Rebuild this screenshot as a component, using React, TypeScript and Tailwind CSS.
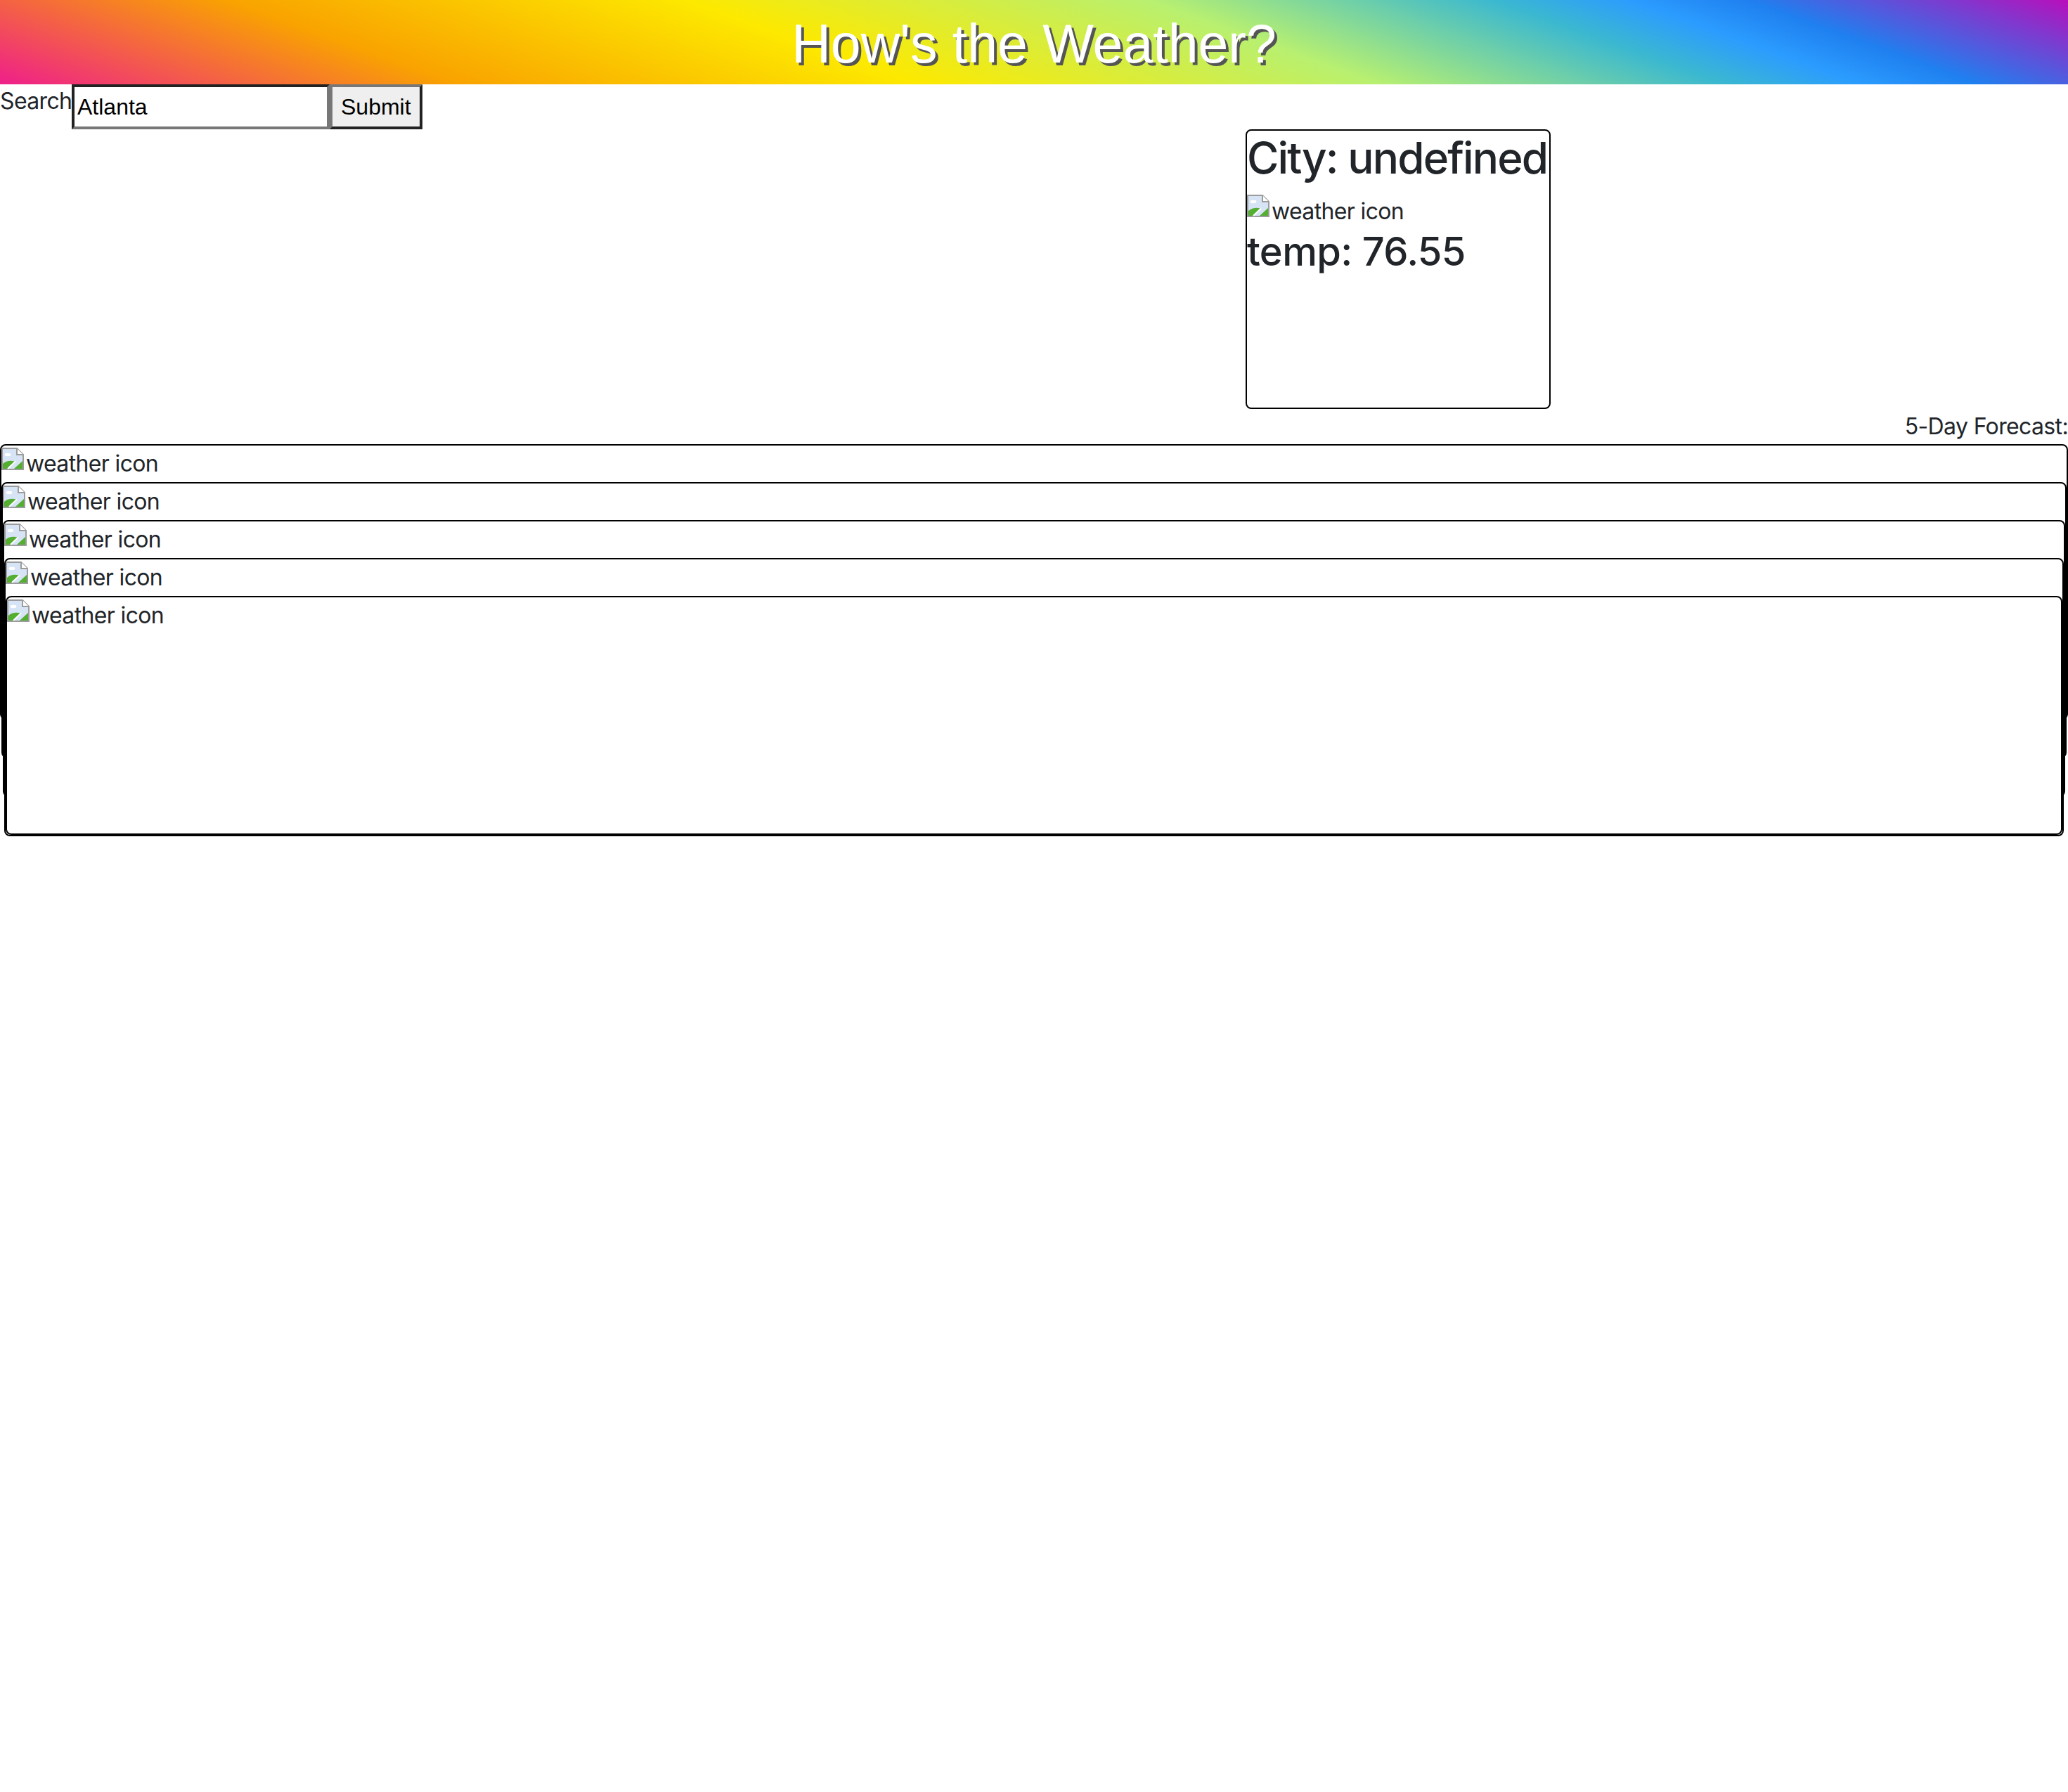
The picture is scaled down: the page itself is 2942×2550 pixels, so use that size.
import React from "react";

function BrokenImg() {
  return (
    <svg width="32" height="32" viewBox="0 0 16 16" className="shrink-0">
      <path d="M0.5 0.5 H11 L15.5 5 V15.5 H0.5 Z" fill="#d6e4f5" stroke="#9c9c9c" strokeWidth="1" />
      <path d="M11 0.5 V5 H15.5" fill="#ffffff" stroke="#9c9c9c" strokeWidth="1" />
      <ellipse cx="4.5" cy="5" rx="2.2" ry="1.1" fill="#ffffff" />
      <path d="M1 15 V11.5 Q4.5 8.5 9.5 9.8 L4.5 15 Z" fill="#54ae32" />
      <path d="M9 15 L15 9.5 V15 Z" fill="#54ae32" />
      <path d="M4.5 15 L10 9.8" stroke="#ffffff" strokeWidth="1" />
    </svg>
  );
}

const heights = ["h-[392px]", "h-[393px]", "h-[394px]", "h-auto", "h-[340px]"];

function Forecast({ level }: { level: number }) {
  if (level >= heights.length) return null;
  return (
    <div className={`border-2 border-solid border-black rounded-lg bg-white ${heights[level]}`}>
      <div className="flex h-[52px]">
        <div className="mt-[3px]">
          <BrokenImg />
        </div>
        <span className="ml-[3px] leading-[52px] whitespace-nowrap">weather icon</span>
      </div>
      <Forecast level={level + 1} />
    </div>
  );
}

export default function App() {
  return (
    <div className="min-h-[2550px] bg-white text-[#212529] font-['Inter','Noto_Sans',sans-serif] text-[32px] tracking-[-0.02em]">
      <header className="h-[120px] bg-[linear-gradient(20deg,#ef1f8a_0%,#f9a300_20%,#fde900_40%,#b8f070_60%,#3bb8d0_75%,#2b9cff_81%,#1f80ef_86%,#b80fbb_100%)] text-center">
        <h1 className="pt-[24px] font-['Liberation_Sans',Arial,sans-serif] text-[77px] leading-none tracking-normal text-white [text-shadow:4px_4px_0_#555555]">
          How's the Weather?
        </h1>
      </header>

      <div className="flex h-[64px]">
        <label className="w-[102px] leading-[48px] whitespace-nowrap">Search</label>
        <input
          defaultValue="Atlanta"
          className="w-[367px] h-[64px] px-[4px] py-[2px] border-4 border-solid border-t-[#222222] border-l-[#222222] border-b-[#777777] border-r-[#777777] bg-white text-black font-['Liberation_Sans',Arial,sans-serif] text-[32px] tracking-normal outline-none"
        />
        <button className="h-[64px] px-[12px] py-[2px] border-4 border-solid border-t-[#777777] border-l-[#777777] border-b-[#222222] border-r-[#222222] bg-[#efefef] text-black font-['Liberation_Sans',Arial,sans-serif] text-[32px] tracking-normal">
          Submit
        </button>
      </div>

      <div className="flex justify-end w-[2206px]">
        <div className="w-[434px] h-[398px] border-2 border-solid border-black rounded-lg">
          <h2 className="text-[62px] leading-[77px] tracking-[-0.03em] font-medium whitespace-nowrap">City: undefined</h2>
          <div className="flex h-[47px] mt-[14px]">
            <BrokenImg />
            <span className="ml-[3px] leading-[47px] whitespace-nowrap">weather icon</span>
          </div>
          <h3 className="text-[56px] leading-[69px] font-medium whitespace-nowrap">temp: 76.55</h3>
        </div>
      </div>

      <div className="text-right leading-[50px]">5-Day Forecast:</div>

      <Forecast level={0} />
    </div>
  );
}
